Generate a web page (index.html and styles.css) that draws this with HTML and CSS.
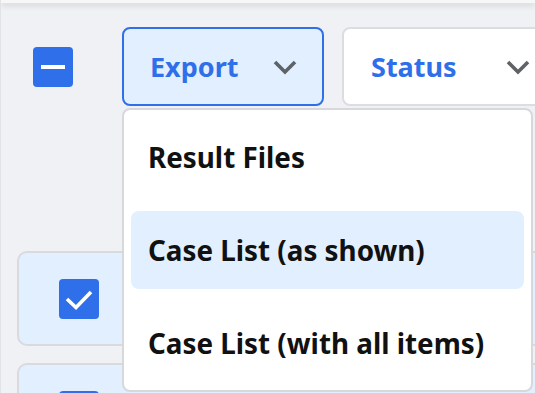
FILE: index.html
```html
<!DOCTYPE html>
<html>
<head>
<meta charset="utf-8">
<link rel="stylesheet" href="styles.css">
</head>
<body>
<div class="topbar"></div>
<div class="page">
  <div class="toolbar">
    <span class="cb">
      <svg width="40" height="40" viewBox="0 0 40 40"><rect x="8" y="18" width="24" height="4" fill="#fff"/></svg>
    </span>
    <div class="dd">
      <button class="btn btn-active">
        <span class="btn-label">Export</span>
        <svg class="chev" width="26" height="16" viewBox="0 0 26 16"><polyline points="3,3 13,13 23,3" fill="none" stroke="#5f6368" stroke-width="3.6"/></svg>
      </button>
      <div class="menu">
        <div class="item">Result Files</div>
        <div class="item item-hover">Case List (as shown)</div>
        <div class="item">Case List (with all items)</div>
      </div>
    </div>
    <div class="clip">
      <button class="btn btn-status">
        <span class="btn-label">Status</span>
        <svg class="chev" width="26" height="16" viewBox="0 0 26 16"><polyline points="3,3 13,13 23,3" fill="none" stroke="#5f6368" stroke-width="3.6"/></svg>
      </button>
    </div>
  </div>
  <div class="list">
    <div class="row">
      <span class="cb">
        <svg width="40" height="40" viewBox="0 0 40 40"><polyline points="8,20 17,28.5 32,13" fill="none" stroke="#fff" stroke-width="3.6"/></svg>
      </span>
    </div>
    <div class="row">
      <span class="cb">
        <svg width="40" height="40" viewBox="0 0 40 40"><polyline points="8,20 17,28.5 32,13" fill="none" stroke="#fff" stroke-width="3.6"/></svg>
      </span>
    </div>
  </div>
</div>
</body>
</html>
```

FILE: styles.css
```css
* { box-sizing: border-box; }
html, body {
  margin: 0;
  height: 100%;
  overflow: hidden;
}
body {
  background: #f0f1f5;
  font-family: "Noto Sans", "Open Sans", sans-serif;
  border-left: 1px solid #e2e3e7;
}
.topbar {
  height: 3px;
  background: #f7f7f8;
  box-shadow: 0 2px 6px rgba(0, 0, 0, 0.18);
  position: relative;
  z-index: 1;
}
.page {
  padding-top: 24px;
  height: 390px;
  overflow: hidden;
}
.toolbar {
  display: flex;
  align-items: center;
  padding-left: 32px;
}
.cb {
  width: 40px;
  height: 40px;
  border-radius: 4px;
  background: #2f6fe9;
  display: flex;
  flex-shrink: 0;
}
.toolbar > .cb {
  margin-right: 49px;
}
.dd {
  position: relative;
  margin-right: 18px;
  z-index: 5;
}
.clip {
  flex: 1;
  min-width: 0;
  overflow: hidden;
}
.btn {
  display: flex;
  align-items: center;
  height: 79px;
  width: 202px;
  padding: 0 24px 0 26px;
  border: 2px solid #dcdde1;
  border-radius: 8px;
  background: #fff;
  font-family: inherit;
  font-size: 27px;
  font-weight: 700;
  color: #2f6fe9;
  flex-shrink: 0;
}
.btn-active {
  background: #e1effe;
  border-color: #2f6fe9;
}
.btn-status {
  width: 215px;
  padding-left: 27px;
}
.btn-label {
  line-height: 1;
}
.chev {
  margin-left: auto;
  display: block;
}
.menu {
  position: absolute;
  left: 0;
  top: 81px;
  width: 411px;
  background: #fff;
  border: 2px solid #d6d8dc;
  border-radius: 8px;
  padding: 8px 7px;
  display: flex;
  flex-direction: column;
  gap: 15px;
}
.item {
  height: 78px;
  display: flex;
  align-items: center;
  padding-left: 17px;
  font-size: 27.8px;
  font-weight: 700;
  color: #111;
  border-radius: 8px;
  white-space: nowrap;
}
.item-hover {
  background: #e1effe;
}
.list {
  margin-top: 145px;
  padding-left: 16px;
  display: flex;
  flex-direction: column;
  gap: 17px;
}
.row {
  flex-shrink: 0;
  height: 95px;
  margin-right: -20px;
  background: #e1effe;
  border: 2px solid #d9dadf;
  border-radius: 10px;
  display: flex;
  align-items: center;
  padding-left: 40px;
}
```
